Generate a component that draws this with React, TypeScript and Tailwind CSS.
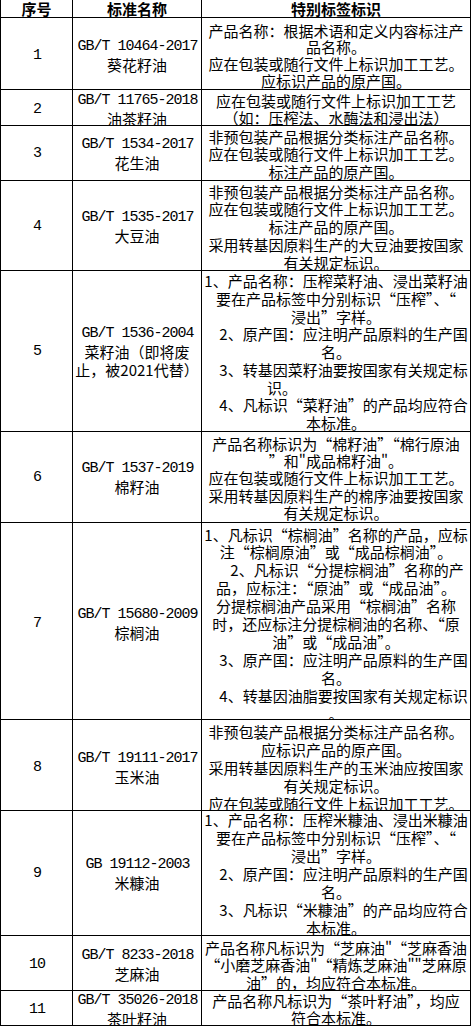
import React from "react";

type Line = { t: string; cls?: string };
type Row = {
  n: string;
  std: string;
  names: string[];
  pad: string;
  lead: string;
  spec: Line[];
};

const L = (t: string, cls?: string): Line => ({ t, cls });

const rows: Row[] = [
  {
    n: "1",
    std: "GB/T 10464-2017",
    names: ["葵花籽油"],
    pad: "pt-[5px]",
    lead: "leading-[16.7px]",
    spec: [
      L("产品名称：根据术语和定义内容标注产"),
      L("品名称。"),
      L("应在包装或随行文件上标识加工工艺。"),
      L("应标识产品的原产国。"),
    ],
  },
  {
    n: "2",
    std: "GB/T 11765-2018",
    names: ["油茶籽油"],
    pad: "pt-[4px]",
    lead: "leading-[16.7px]",
    spec: [L("应在包装或随行文件上标识加工工艺"), L("（如：压榨法、水酶法和浸出法）")],
  },
  {
    n: "3",
    std: "GB/T 1534-2017",
    names: ["花生油"],
    pad: "pt-[2px]",
    lead: "leading-[17.5px]",
    spec: [
      L("非预包装产品根据分类标注产品名称。"),
      L("应在包装或随行文件上标识加工工艺。"),
      L("标注产品的原产国。"),
    ],
  },
  {
    n: "4",
    std: "GB/T 1535-2017",
    names: ["大豆油"],
    pad: "pt-[3px]",
    lead: "leading-[17.8px]",
    spec: [
      L("非预包装产品根据分类标注产品名称。"),
      L("应在包装或随行文件上标识加工工艺。"),
      L("标注产品的原产国。"),
      L("采用转基因原料生产的大豆油要按国家"),
      L("有关规定标识。"),
    ],
  },
  {
    n: "5",
    std: "GB/T 1536-2004",
    names: ["菜籽油（即将废", "止，被2021代替）"],
    pad: "pt-[2px]",
    lead: "leading-[17.7px]",
    spec: [
      L("1、产品名称：压榨菜籽油、浸出菜籽油"),
      L("要在产品标签中分别标识“压榨”、“"),
      L("浸出”字样。"),
      L("2、原产国：应注明产品原料的生产国", "pl-[15px]"),
      L("名。"),
      L("3、转基因菜籽油要按国家有关规定标", "pl-[15px]"),
      L("识。", "pr-[108px]"),
      L("4、凡标识“菜籽油”的产品均应符合", "pl-[15px]"),
      L("本标准。"),
    ],
  },
  {
    n: "6",
    std: "GB/T 1537-2019",
    names: ["棉籽油"],
    pad: "pt-[2px]",
    lead: "leading-[17.3px]",
    spec: [
      L("产品名称标识为“棉籽油”“棉行原油"),
      L("”和\"成品棉籽油\"。"),
      L("应在包装或随行文件上标识加工工艺。"),
      L("采用转基因原料生产的棉序油要按国家"),
      L("有关规定标识。"),
    ],
  },
  {
    n: "7",
    std: "GB/T 15680-2009",
    names: ["棕榈油"],
    pad: "pt-[6px]",
    lead: "leading-[17.9px]",
    spec: [
      L("1、凡标识“棕榈油”名称的产品，应标"),
      L("注“棕榈原油”或“成品棕榈油”。"),
      L("2、凡标识“分提棕榈油”名称的产", "pl-[22px]"),
      L("品，应标注：“原油”或“成品油”。"),
      L("分提棕榈油产品采用“棕榈油”名称"),
      L("时，还应标注分提棕榈油的名称、“原"),
      L("油”或“成品油”。"),
      L("3、原产国：应注明产品原料的生产国", "pl-[15px]"),
      L("名。"),
      L("4、转基因油脂要按国家有关规定标识", "pl-[15px]"),
      L("。"),
    ],
  },
  {
    n: "8",
    std: "GB/T 19111-2017",
    names: ["玉米油"],
    pad: "pt-[6px]",
    lead: "leading-[18.1px]",
    spec: [
      L("非预包装产品根据分类标注产品名称。"),
      L("应标识产品的原产国。"),
      L("采用转基因原料生产的玉米油应按国家"),
      L("有关规定标识。"),
      L("应在包装或随行文件上标识加工工艺。"),
    ],
  },
  {
    n: "9",
    std: "GB 19112-2003",
    names: ["米糠油"],
    pad: "pt-[2px]",
    lead: "leading-[18px]",
    spec: [
      L("1、产品名称：压榨米糠油、浸出米糠油"),
      L("要在产品标签中分别标识“压榨”、“"),
      L("浸出”字样。"),
      L("2、原产国：应注明产品原料的生产国", "pl-[15px]"),
      L("名。"),
      L("3、凡标识“米糠油”的产品均应符合", "pl-[15px]"),
      L("本标准。"),
    ],
  },
  {
    n: "10",
    std: "GB/T 8233-2018",
    names: ["芝麻油"],
    pad: "pt-[4px]",
    lead: "leading-[17.5px]",
    spec: [
      L("产品名称凡标识为“芝麻油\"“芝麻香油"),
      L("“小磨芝麻香油\"“精炼芝麻油\"\"芝麻原"),
      L("油”的，均应符合本标准。"),
    ],
  },
  {
    n: "11",
    std: "GB/T 35026-2018",
    names: ["茶叶籽油"],
    pad: "pt-[3px]",
    lead: "leading-[16.7px]",
    spec: [L("产品名称凡标识为“茶叶籽油”，均应"), L("符合本标准。")],
  },
];

const cell =
  "bg-white flex flex-col items-center justify-center overflow-hidden";
const mono =
  "font-['Liberation_Mono','Noto_Sans_CJK_SC',monospace] text-[15px] tracking-[-1px]";

export default function App() {
  return (
    <div
      lang="zh-CN"
      className="min-h-screen bg-white text-black font-['Noto_Sans_CJK_SC','Noto_Sans',sans-serif]"
    >
      <div className="grid w-[471px] grid-cols-[71px_128px_268px] grid-rows-[17px_71px_35px_54px_89px_160px_90px_196px_90px_124px_54px_34px] gap-px bg-black px-px pb-px">
        <div className={`${cell} text-[15px] font-bold leading-[17px]`}>序号</div>
        <div className={`${cell} text-[15px] font-bold leading-[17px]`}>标准名称</div>
        <div className={`${cell} text-[15px] font-bold leading-[17px]`}>特别标签标识</div>
        {rows.map((r) => (
          <React.Fragment key={r.n}>
            <div className={`${cell} ${r.pad} leading-[17.8px]`}>
              <span className={`${mono} pl-[1px]`}>{r.n}</span>
            </div>
            <div className={`${cell} ${r.pad} text-[15px] leading-[17.8px]`}>
              <div className={`${mono} whitespace-nowrap pl-[1px]`}>{r.std}</div>
              {r.names.map((nm, i) => (
                <div key={i} className="whitespace-nowrap">
                  {nm}
                </div>
              ))}
            </div>
            <div className={`${cell} ${r.pad} ${r.lead} text-[15px]`}>
              {r.spec.map((ln, i) => (
                <div
                  key={i}
                  className={`w-full whitespace-nowrap text-center ${ln.cls ?? ""}`}
                >
                  {ln.t}
                </div>
              ))}
            </div>
          </React.Fragment>
        ))}
      </div>
    </div>
  );
}
